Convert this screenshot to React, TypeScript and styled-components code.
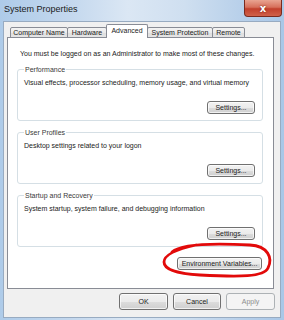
import styled, { createGlobalStyle } from 'styled-components';

const Global = createGlobalStyle`
  html, body {
    margin: 0;
    padding: 0;
    background: #b9d1ea;
  }
  body {
    font-family: 'Liberation Sans', Arial, sans-serif;
  }
`;

const Window = styled.div`
  position: relative;
  width: 284px;
  height: 320px;
  display: flex;
  flex-direction: column;
  overflow: hidden;
  background: linear-gradient(
    to right,
    #aecbe9 0%,
    #c4d8ee 25%,
    #dbe7f4 45%,
    #cfdff0 65%,
    #b8d0ea 85%,
    #a9c7e7 100%
  );
`;

const TitleBar = styled.div`
  height: 21px;
  flex: none;
  display: flex;
  justify-content: space-between;
  align-items: flex-start;
  padding-left: 4px;
`;

const Title = styled.div`
  padding-top: 4px;
  font-size: 9px;
  line-height: 11px;
  color: #1a1a1a;
`;

const CloseButton = styled.div`
  width: 38px;
  height: 17px;
  margin-right: 2px;
  box-sizing: border-box;
  border: 1px solid #7a2a1e;
  border-top: none;
  border-radius: 0 0 4px 4px;
  background: linear-gradient(to bottom, #e9a491 0%, #d7705b 45%, #c2402c 55%, #d0614a 100%);
  display: flex;
  align-items: center;
  justify-content: center;
  color: #fff;
  font-family: 'DejaVu Sans', sans-serif;
  font-weight: bold;
  font-size: 10px;
  text-shadow: 0 0 2px #6b1a10;
`;

const Client = styled.div`
  flex: 1;
  margin: 0 3px 2px 3px;
  border: 1px solid #98abc1;
  background: #f0f0f0;
  display: flex;
  flex-direction: column;
  padding: 2px 6px 7px 3px;
  font-size: 7px;
  line-height: 9px;
  color: #222;
`;

const TabStrip = styled.div`
  display: flex;
  align-items: flex-end;
  height: 14px;
  padding-left: 3px;
  margin-bottom: -1px;
  position: relative;
  z-index: 1;
`;

const Tab = styled.div<{ $w: number; $active?: boolean }>`
  width: ${(p) => p.$w + 1}px;
  margin-right: -1px;
  box-sizing: border-box;
  height: ${(p) => (p.$active ? 14 : 11)}px;
  border: 1px solid #898c95;
  border-bottom: ${(p) => (p.$active ? 'none' : '1px solid #898c95')};
  border-radius: 2px 2px 0 0;
  background: ${(p) =>
    p.$active ? '#ffffff' : 'linear-gradient(to bottom, #f3f3f3 0%, #ebebeb 50%, #dedede 51%, #e5e5e5 100%)'};
  position: relative;
  z-index: ${(p) => (p.$active ? 2 : 0)};
  display: flex;
  align-items: center;
  justify-content: center;
  padding-bottom: ${(p) => (p.$active ? 2 : 0)}px;
  white-space: nowrap;
`;

const Panel = styled.div`
  flex: 1;
  background: #fff;
  border: 1px solid #898c95;
  padding: 11px 10px 0 9px;
  display: flex;
  flex-direction: column;
`;

const Intro = styled.div`
  padding-left: 3px;
  margin-bottom: 7px;
  white-space: nowrap;
`;

const Group = styled.fieldset`
  margin: 0 0 7px 0;
  padding: 0 7px 6px 6px;
  border: 1px solid #d5dfe5;
  border-radius: 3px;
  display: flex;
  flex-direction: column;
`;

const Legend = styled.legend`
  padding: 0 1px;
  margin-left: 0;
  color: #3a3a3a;
`;

const Desc = styled.div`
  margin-top: 4px;
  white-space: nowrap;
`;

const ButtonRow = styled.div<{ $top: number }>`
  display: flex;
  justify-content: flex-end;
  margin-top: ${(p) => p.$top}px;
`;

const Button = styled.button<{ $w: number; $h: number; $disabled?: boolean }>`
  width: ${(p) => p.$w}px;
  height: ${(p) => p.$h}px;
  box-sizing: border-box;
  padding: 0;
  font-family: inherit;
  font-size: 7px;
  line-height: 9px;
  border-radius: 3px;
  border: 1px solid ${(p) => (p.$disabled ? '#adb2b5' : '#707070')};
  color: ${(p) => (p.$disabled ? '#8d8d8d' : '#222')};
  background: ${(p) =>
    p.$disabled
      ? '#f4f4f4'
      : 'linear-gradient(to bottom, #f2f2f2 0%, #ebebeb 50%, #dddddd 51%, #cfcfcf 100%)'};
  box-shadow: inset 0 0 0 1px ${(p) => (p.$disabled ? '#f4f4f4' : 'rgba(255,255,255,0.7)')};
`;

const EnvRow = styled.div`
  display: flex;
  justify-content: flex-end;
  margin-top: 3px;
  padding-right: 1px;
`;

const Footer = styled.div`
  display: flex;
  justify-content: flex-end;
  gap: 5px;
  margin-top: 4px;
  margin-right: -1px;
`;

const Annotation = styled.svg`
  position: absolute;
  left: 0;
  top: 0;
  pointer-events: none;
`;

const tabs = [
  { label: 'Computer Name', w: 57 },
  { label: 'Hardware', w: 39 },
  { label: 'Advanced', w: 41, active: true },
  { label: 'System Protection', w: 65 },
  { label: 'Remote', w: 32 },
];

const groups = [
  { title: 'Performance', desc: 'Visual effects, processor scheduling, memory usage, and virtual memory' },
  { title: 'User Profiles', desc: 'Desktop settings related to your logon' },
  { title: 'Startup and Recovery', desc: 'System startup, system failure, and debugging information' },
];

export default function App() {
  return (
    <>
      <Global />
      <Window>
        <TitleBar>
          <Title>System Properties</Title>
          <CloseButton>x</CloseButton>
        </TitleBar>
        <Client>
          <TabStrip>
            {tabs.map((t) => (
              <Tab key={t.label} $w={t.w} $active={t.active}>
                {t.label}
              </Tab>
            ))}
          </TabStrip>
          <Panel>
            <Intro>You must be logged on as an Administrator to make most of these changes.</Intro>
            {groups.map((g) => (
              <Group key={g.title}>
                <Legend>{g.title}</Legend>
                <Desc>{g.desc}</Desc>
                <ButtonRow $top={14}>
                  <Button $w={48} $h={13}>Settings...</Button>
                </ButtonRow>
              </Group>
            ))}
            <EnvRow>
              <Button $w={85} $h={13}>Environment Variables...</Button>
            </EnvRow>
          </Panel>
          <Footer>
            <Button $w={49} $h={17}>OK</Button>
            <Button $w={48} $h={17}>Cancel</Button>
            <Button $w={49} $h={17} $disabled>Apply</Button>
          </Footer>
        </Client>
        {/* hand-drawn red marker around the env button */}
        <Annotation width={284} height={320} viewBox="0 0 284 320">
          <path
            d="M 172 252 C 182 243, 215 243, 250 245 C 268 246, 273 258, 268 268 C 264 277, 240 277, 200 275 C 180 274, 164 270, 164 262 C 164 254, 178 249, 196 245"
            fill="none"
            stroke="#e20a0a"
            strokeWidth={2.8}
            strokeLinecap="round"
            strokeLinejoin="round"
          />
        </Annotation>
      </Window>
    </>
  );
}
